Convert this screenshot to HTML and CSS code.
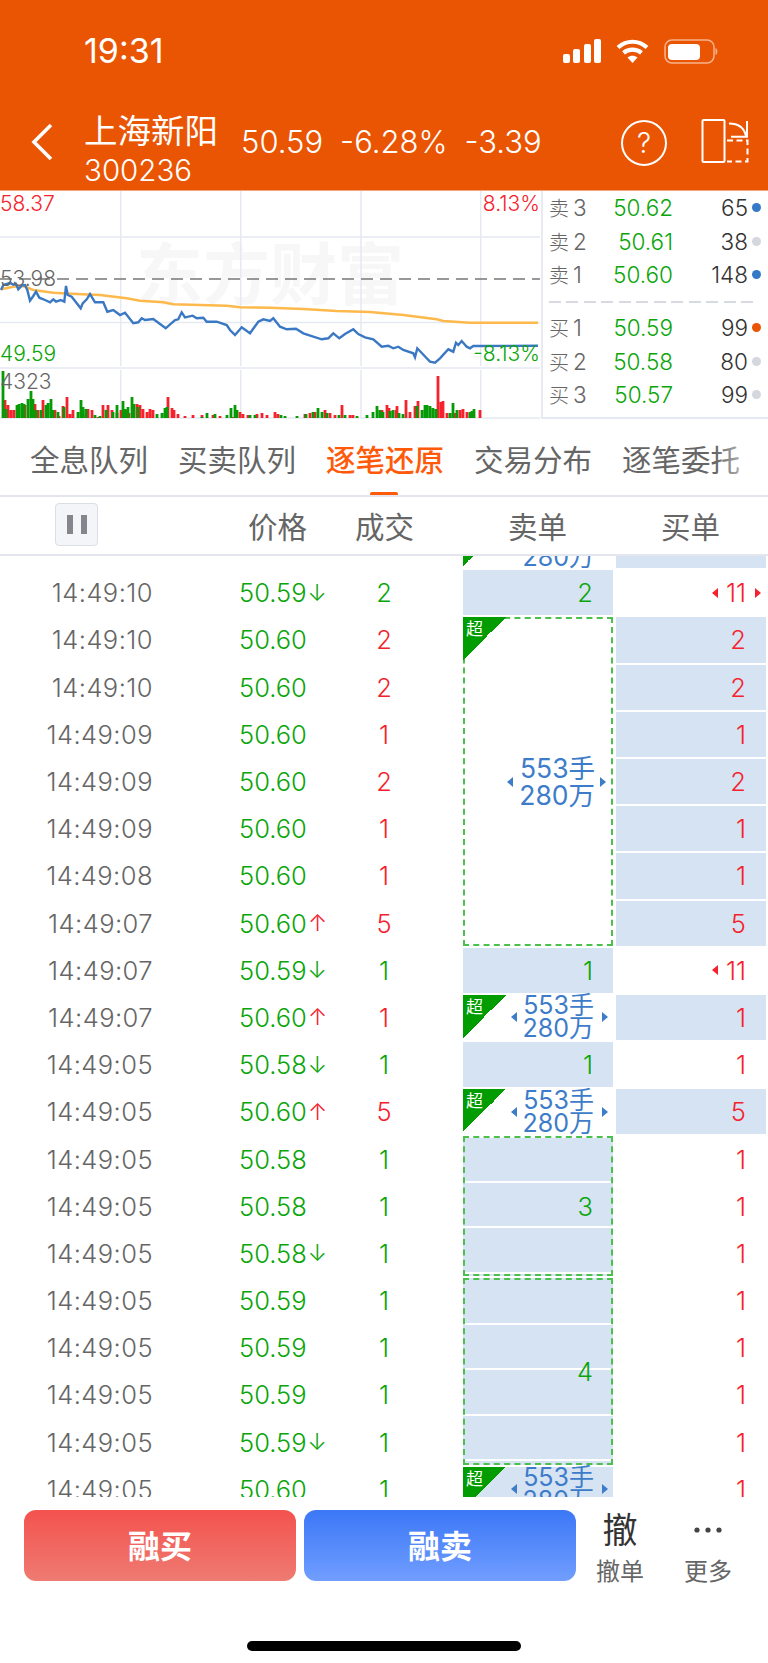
FILE: index.html
```html
<!DOCTYPE html>
<html lang="zh-CN">
<head>
    <meta charset="UTF-8">
    <meta name="viewport" content="width=device-width, initial-scale=1.0">
    <title>上海新阳 逐笔还原</title>
    <link rel="stylesheet" href="styles.css">
</head>
<body>
    <header class="top">
        <div class="status">
            <span class="clock">19:31</span>
            <div class="status-icons">
                <svg width="38" height="24" viewBox="0 0 38 24" fill="#fff">
                    <rect x="0" y="15" width="7" height="9" rx="2"/>
                    <rect x="10" y="10" width="7" height="14" rx="2"/>
                    <rect x="21" y="5" width="7" height="19" rx="2"/>
                    <rect x="31" y="0" width="7" height="24" rx="2"/>
                </svg>
                <svg width="33" height="24" viewBox="0 0 33 24" fill="none" stroke="#fff" stroke-width="4.2">
                    <path d="M2 8.5C10.500 .8 22.500 .8 31 8.500"/>
                    <path d="M7.500 13.800C12.500 9.500 20.500 9.500 25.500 13.800"/>
                    <path d="M16.500 24L11.500 18.500C14.500 16 18.500 16 21.500 18.500Z" fill="#fff" stroke="none"/>
                </svg>
                <svg width="54" height="25" viewBox="0 0 54 25">
                    <rect x="1" y="1" width="49" height="23" rx="7" fill="none" stroke="#f7b38c" stroke-width="1.500"/>
                    <rect x="4" y="5" width="32" height="16" rx="4" fill="#fff"/>
                    <path d="M51.500 9c2.500 .5 2.500 6.500 0 7z" fill="#f7b38c"/>
                </svg>
            </div>
        </div>
        <div class="nav">
            <svg class="back" width="22" height="38" viewBox="0 0 22 38" fill="none" stroke="#fff" stroke-width="3.600">
                <path d="M20 2L3 19L20 36"/>
            </svg>
            <div class="stock">
                <span class="stock-name">上海新阳</span>
                <span class="stock-code">300236</span>
            </div>
            <div class="quote">
                <span>50.59</span>
                <span>-6.28%</span>
                <span>-3.39</span>
            </div>
            <span class="help">?</span>
            <svg class="switch" width="48" height="44" viewBox="702 119 48 44" fill="none" stroke="#fff" stroke-width="2">
                <rect x="703.500" y="120" width="22" height="42" rx="1"/>
                <path d="M730 123.500C739 123.500 745 127 747 136"/>
                <path d="M732 136.700H748V121"/>
                <path d="M728 140.500H748.500V161.500H728" stroke-dasharray="6 3.500"/>
            </svg>
        </div>
    </header>

    <section class="market">
        <div class="chart">
            <span class="watermark">东方财富</span>
            <svg class="chart-lines" width="540" height="228" viewBox="0 191 540 228" fill="none">
                <path d="M120.700 191V366M240.700 191V366M361 191V366M480.700 191V366M120.700 370V418M240.700 370V418M361 370V418M480.700 370V418" stroke="#e6e9f2" stroke-width="1.500"/>
                <path d="M0 237H540M0 322.500H540M0 368H540M0 418H540" stroke="#e6e9f2" stroke-width="1.500"/>
                <path d="M0 279H540" stroke="#777" stroke-width="1.500" stroke-dasharray="12 7"/>
                <path class="avg-line" d="M1 289.300L13.300 286.700L23.300 286L33.300 290L53.300 292.700L76.700 294L100 295L126.700 298.300L140 300.700L163.300 302.300L173.300 304.300L200 305L226.700 305.700L240 307.300L270 307.700L303.300 309L336.700 311L370 312L403.300 315L436.700 319.300L443.300 321L470 322.700L538 322.700"/>
                <path class="price-line" d="M1 290L3.300 285L6.700 284L10 282.700L13.300 284.700L16 284L18.300 289.300L21.700 285.700L25 285L27.300 290L30 300.700L33.300 296L36 291.700L39.300 297.700L45 300L50 302.300L53.300 299.300L56 301.700L60.700 300L64.300 301.700L66 286L67.700 295L71.700 296.700L76 302.300L80.700 308.300L82.700 303.300L86.700 299.300L90 294L95 302.300L103.300 302.300L107.300 311.700L113.300 310L120 315L125 312.700L133.300 323.300L138.300 322.300L141.700 318.300L145 320L153.300 319L165.700 328.300L175 320L178.300 319.300L181.700 312.300L185 317.300L192.700 315.700L196.700 318.300L203.300 317.700L206.700 321.700L216.700 321.700L226.700 325L230 330L235 335L241.700 327.300L250 333.300L258.300 321.700L263.300 319.300L270 321L273.300 318.300L280 326.700L286.700 329.300L296 328.700L303.300 333.300L313.300 336.700L321.700 339.300L328.300 338.300L333.300 333.300L339.300 338.300L345 334L353.300 329.300L358.300 334L365 337.300L373.300 339.300L381.700 346.700L388.300 345.700L393.300 348.300L398.300 346.700L403.300 350L413.300 353.300L415 357.300L417.300 348.300L426.700 358.300L430 361.700L435 362.700L440 358.300L448.300 349.300L453.300 351.700L456 342.700L458.300 345L461.700 341L466.700 346.700L470 348.300L473.300 346L480 346L538 345.700"/>
                <path class="vol-up" d="M5 418v-18M8 418v-13M11 418v-8M14 418v-8M25 418v-13M35 418v-14M38 418v-8M43 418v-18M47 418v-6M55 418v-8M59 418v-2M63 418v-12M67 418v-21M70 418v-4M73 418v-8M83 418v-4M88 418v-9M92 418v-8M98 418v-1M103 418v-13M108 418v-13M112 418v-8M117 418v-5M121 418v-8M126 418v-8M129 418v-5M137 418v-14M140 418v-13M143 418v-9M147 418v-6M150 418v-9M153 418v-8M168 418v-21M172 418v-10M174 418v-8M178 418v-4M185 418v-2M193 418v-3M202 418v-3M213 418v-3M220 418v-2M233 418v-1M240 418v-6M243 418v-4M248 418v-3M257 418v-4M262 418v-5M267 418v-3M275 418v-6M278 418v-4M305 418v-4M310 418v-5M315 418v-6M325 418v-8M330 418v-5M335 418v-3M342 418v-13M350 418v-3M353 418v-3M382 418v-8M387 418v-13M389 418v-10M396 418v-8M397 418v-12M406 418v-18M410 418v-6M415 418v-12M418 418v-17M438 418v-42M441 418v-16M443 418v-17M447 418v-5M455 418v-5M460 418v-8M463 418v-9M467 418v-6M480 418v-8"/>
                <path class="vol-down" d="M3 418v-47M6 418v-9M17 418v-13M19 418v-14M22 418v-15M24 418v-14M28 418v-19M31 418v-27M33 418v-19M36 418v-8M41 418v-8M46 418v-13M48 418v-15M51 418v-19M53 418v-8M58 418v-6M64 418v-11M78 418v-6M81 418v-18M83 418v-11M86 418v-9M95 418v-3M100 418v-2M106 418v-8M113 418v-6M117 418v-13M123 418v-17M125 418v-9M128 418v-11M132 418v-21M134 418v-14M138 418v-11M157 418v-4M162 418v-5M165 418v-10M167 418v-11M202 418v-1M207 418v-5M215 418v-4M227 418v-3M231 418v-10M235 418v-13M237 418v-8M250 418v-3M255 418v-3M281 418v-3M285 418v-2M297 418v-2M306 418v-4M313 418v-6M318 418v-10M322 418v-6M327 418v-5M339 418v-3M345 418v-3M357 418v-2M367 418v-3M373 418v-6M377 418v-12M380 418v-8M383 418v-6M390 418v-7M393 418v-8M399 418v-5M403 418v-4M417 418v-12M422 418v-8M425 418v-13M427 418v-13M430 418v-12M433 418v-10M436 418v-9M450 418v-5M453 418v-15M457 418v-8M470 418v-6M472 418v-7M474 418v-9"/>
            </svg>
            <span class="axis axis-high">58.37</span>
            <span class="axis axis-high-pct">8.13%</span>
            <span class="axis axis-base">53.98</span>
            <span class="axis axis-low">49.59</span>
            <span class="axis axis-low-pct">-8.13%</span>
            <span class="axis axis-vol">4323</span>
        </div>
        <div class="book">
            <div class="book-group">
                <div class="level"><span class="level-name">卖<i>3</i></span><span class="level-price">50.62</span><span class="level-qty">65</span><span class="dot dot-blue"></span></div>
                <div class="level"><span class="level-name">卖<i>2</i></span><span class="level-price">50.61</span><span class="level-qty">38</span><span class="dot"></span></div>
                <div class="level"><span class="level-name">卖<i>1</i></span><span class="level-price">50.60</span><span class="level-qty">148</span><span class="dot dot-blue"></span></div>
            </div>
            <div class="book-rule"></div>
            <div class="book-group">
                <div class="level"><span class="level-name">买<i>1</i></span><span class="level-price">50.59</span><span class="level-qty">99</span><span class="dot dot-orange"></span></div>
                <div class="level"><span class="level-name">买<i>2</i></span><span class="level-price">50.58</span><span class="level-qty">80</span><span class="dot"></span></div>
                <div class="level"><span class="level-name">买<i>3</i></span><span class="level-price">50.57</span><span class="level-qty">99</span><span class="dot"></span></div>
            </div>
        </div>
    </section>

    <nav class="tabs">
        <span>全息队列</span>
        <span>买卖队列</span>
        <span class="active">逐笔还原</span>
        <span>交易分布</span>
        <span>逐笔委托</span>
    </nav>

    <div class="ticks-head">
        <div class="pause"><i></i><i></i></div>
        <span class="head-price">价格</span>
        <span class="head-count">成交</span>
        <span class="head-sell">卖单</span>
        <span class="head-buy">买单</span>
    </div>

    <main class="ticks">
        <div class="ticks-grid">
            <!-- this row has scrolled almost out, only the tail of the order shows -->
            <div class="sell big-order"><b class="flag"></b><span class="caret-l"></span><div class="lots"><span class="blank"></span><span>280万</span></div><span class="caret-r"></span></div>
            <div class="buy fill"></div>

            <div class="time">14:49:10</div><div class="price">50.59<em class="green">↓</em></div><div class="count green">2</div>
            <div class="sell fill green">2</div>
            <div class="buy red"><span class="caret-l"></span><span class="num">11</span><span class="caret-r"></span></div>

            <div class="time">14:49:10</div><div class="price">50.60</div><div class="count red">2</div>
            <div class="sell merged span-7"><b class="flag">超</b><span class="caret-l"></span><div class="lots lots-big"><span>553手</span><span>280万</span></div><span class="caret-r"></span></div>
            <div class="buy fill red">2</div>

            <div class="time">14:49:10</div><div class="price">50.60</div><div class="count red">2</div>
            <div class="buy fill red">2</div>

            <div class="time">14:49:09</div><div class="price">50.60</div><div class="count red">1</div>
            <div class="buy fill red">1</div>

            <div class="time">14:49:09</div><div class="price">50.60</div><div class="count red">2</div>
            <div class="buy fill red">2</div>

            <div class="time">14:49:09</div><div class="price">50.60</div><div class="count red">1</div>
            <div class="buy fill red">1</div>

            <div class="time">14:49:08</div><div class="price">50.60</div><div class="count red">1</div>
            <div class="buy fill red">1</div>

            <div class="time">14:49:07</div><div class="price">50.60<em class="red">↑</em></div><div class="count red">5</div>
            <div class="buy fill red">5</div>

            <div class="time">14:49:07</div><div class="price">50.59<em class="green">↓</em></div><div class="count green">1</div>
            <div class="sell fill green">1</div>
            <div class="buy red"><span class="caret-l"></span><span class="num">11</span></div>

            <div class="time">14:49:07</div><div class="price">50.60<em class="red">↑</em></div><div class="count red">1</div>
            <div class="sell big-order"><b class="flag">超</b><span class="caret-l"></span><div class="lots"><span>553手</span><span>280万</span></div><span class="caret-r"></span></div>
            <div class="buy fill red">1</div>

            <div class="time">14:49:05</div><div class="price">50.58<em class="green">↓</em></div><div class="count green">1</div>
            <div class="sell fill green">1</div>
            <div class="buy red">1</div>

            <div class="time">14:49:05</div><div class="price">50.60<em class="red">↑</em></div><div class="count red">5</div>
            <div class="sell big-order"><b class="flag">超</b><span class="caret-l"></span><div class="lots"><span>553手</span><span>280万</span></div><span class="caret-r"></span></div>
            <div class="buy fill red">5</div>

            <div class="time">14:49:05</div><div class="price">50.58</div><div class="count green">1</div>
            <div class="sell merged merged-fill span-3 green">3</div>
            <div class="buy red">1</div>

            <div class="time">14:49:05</div><div class="price">50.58</div><div class="count green">1</div>
            <div class="buy red">1</div>

            <div class="time">14:49:05</div><div class="price">50.58<em class="green">↓</em></div><div class="count green">1</div>
            <div class="buy red">1</div>

            <div class="time">14:49:05</div><div class="price">50.59</div><div class="count green">1</div>
            <div class="sell merged merged-fill span-4 green">4</div>
            <div class="buy red">1</div>

            <div class="time">14:49:05</div><div class="price">50.59</div><div class="count green">1</div>
            <div class="buy red">1</div>

            <div class="time">14:49:05</div><div class="price">50.59</div><div class="count green">1</div>
            <div class="buy red">1</div>

            <div class="time">14:49:05</div><div class="price">50.59<em class="green">↓</em></div><div class="count green">1</div>
            <div class="buy red">1</div>

            <div class="time">14:49:05</div><div class="price">50.60</div><div class="count green">1</div>
            <div class="sell big-order fill"><b class="flag">超</b><span class="caret-l"></span><div class="lots"><span>553手</span><span>280万</span></div><span class="caret-r"></span></div>
            <div class="buy red">1</div>
        </div>
    </main>

    <footer class="actions">
        <div class="action-row">
            <button class="trade trade-buy">融买</button>
            <button class="trade trade-sell">融卖</button>
            <div class="tool">
                <span class="tool-icon">撤</span>
                <span class="tool-label">撤单</span>
            </div>
            <div class="tool">
                <svg class="tool-dots" width="30" height="34" viewBox="0 0 30 34" fill="#444">
                    <circle cx="4" cy="17" r="2.600"/>
                    <circle cx="15" cy="17" r="2.600"/>
                    <circle cx="26" cy="17" r="2.600"/>
                </svg>
                <span class="tool-label">更多</span>
            </div>
        </div>
        <div class="home-bar"></div>
    </footer>
</body>
</html>
```

FILE: styles.css
```css
* {
    box-sizing: border-box;
}
html, body {
    height: 100%;
}
body {
    margin: 0;
    width: 768px;
    height: 1663px;
    display: flex;
    flex-direction: column;
    overflow: hidden;
    font-family: Inter, "Noto Sans CJK SC", sans-serif;
    background-color: #fff;
    color: #666;
}
.green {
    color: #0aa50a;
}
.red {
    color: #f5222d;
}

/* header */
.top {
    height: 191px;
    background-color: #ea5504;
    color: #fff;
    border-bottom: 1px solid #f0a57c;
}
.status {
    height: 112px;
    padding: 34px 50px 0 84px;
    display: flex;
    justify-content: space-between;
    align-items: flex-start;
}
.clock {
    font-size: 34px;
    line-height: 34px;
    font-weight: 400;
}
.status-icons {
    display: flex;
    gap: 15px;
    padding-top: 5px;
}
.nav {
    display: flex;
    align-items: flex-start;
    padding-left: 31px;
    position: relative;
}
.back {
    margin-top: 11px;
}
.stock {
    display: flex;
    flex-direction: column;
    margin-left: 31px;
    width: 157px;
}
.stock-name {
    font-size: 33.500px;
    line-height: 38px;
}
.stock-code {
    font-size: 29.500px;
    line-height: 34px;
    font-weight: 300;
    margin-top: 3px;
}
.quote {
    display: flex;
    gap: 17px;
    font-size: 31px;
    line-height: 36px;
    font-weight: 300;
    padding-top: 12px;
    width: 380px;
}
.help {
    width: 46px;
    height: 46px;
    margin-top: 8px;
    border: 2px solid #fff;
    border-radius: 50%;
    font-size: 28px;
    line-height: 42px;
    text-align: center;
    font-weight: 300;
}
.switch {
    margin: 7px 0 0 34px;
}

/* chart and order book */
.market {
    height: 228px;
    display: flex;
}
.chart {
    width: 541px;
    position: relative;
    overflow: hidden;
}
.chart-lines {
    display: block;
    position: relative;
}
.avg-line {
    stroke: #fdb94b;
    stroke-width: 2.600;
}
.price-line {
    stroke: #3b78c4;
    stroke-width: 2.400;
}
.vol-up {
    stroke: #f5222d;
    stroke-width: 2.800;
}
.vol-down {
    stroke: #079a07;
    stroke-width: 2.800;
}
.watermark {
    position: absolute;
    left: 136px;
    top: 44px;
    font-size: 67px;
    line-height: 80px;
    font-weight: 700;
    color: #f7f7f7;
    white-space: nowrap;
}
.axis {
    position: absolute;
    font-size: 21px;
    line-height: 24px;
    font-weight: 300;
}
.axis-high {
    left: 0;
    top: 1px;
    color: #f5222d;
}
.axis-high-pct {
    right: 1px;
    top: 1px;
    color: #f5222d;
}
.axis-base {
    left: 0;
    top: 76px;
}
.axis-low {
    left: 0;
    top: 151px;
    color: #0aa50a;
}
.axis-low-pct {
    right: 1px;
    top: 151px;
    color: #0aa50a;
}
.axis-vol {
    left: 0;
    top: 179px;
}
.book {
    flex: 1;
    border-left: 2px solid #e8eaf0;
    border-bottom: 2px solid #e6e9f2;
    padding: 0 6px;
}
.book-group {
    display: flex;
    flex-direction: column;
}
.level {
    height: 33.500px;
    display: grid;
    grid-template-columns: 40px 84px 75px 13px;
    align-items: center;
    font-size: 22.500px;
    font-weight: 300;
}
.level-name {
    font-size: 20px;
    color: #666;
    white-space: nowrap;
}
.level-name i {
    font-style: normal;
    font-size: 22.500px;
    margin-left: 4px;
}
.level-price {
    text-align: right;
    color: #0aa50a;
}
.level-qty {
    text-align: right;
    color: #333;
}
.dot {
    justify-self: end;
    width: 9px;
    height: 9px;
    border-radius: 50%;
    background-color: #d4d7dd;
}
.dot-blue {
    background-color: #3578c8;
}
.dot-orange {
    background-color: #ea5504;
}
.book-rule {
    height: 19.500px;
    margin: 0 4px 0 0;
    background: repeating-linear-gradient(90deg, #d8dae3 0 12px, transparent 12px 17.500px) 0 9px / 100% 2px no-repeat;
}

/* tabs */
.tabs {
    height: 78px;
    display: flex;
    gap: 30px;
    padding: 21px 0 0 30px;
    position: relative;
    border-bottom: 2px solid #e4e6ee;
    font-size: 29.500px;
    line-height: 40px;
    white-space: nowrap;
    overflow: hidden;
}
.tabs::after {
    content: "";
    position: absolute;
    right: 0;
    top: 0;
    width: 70px;
    height: 70px;
    background: linear-gradient(90deg, rgba(255, 255, 255, 0) 0%, rgba(255, 255, 255, 0) 25%, #fff 100%);
}
.tabs .active {
    color: #ff5a0a;
    font-weight: 500;
    position: relative;
}
.tabs .active::after {
    content: "";
    position: absolute;
    left: 44px;
    top: 52px;
    width: 28px;
    height: 4px;
    border-radius: 2px;
    background-color: #ff5a0a;
}

/* ticks table */
.ticks-head {
    height: 59px;
    flex-shrink: 0;
    display: grid;
    grid-template-columns: 248px 107px 153px 153px 1fr;
    align-items: center;
    padding-bottom: 2px;
    border-bottom: 2px solid #e4e6ee;
    font-size: 29.500px;
    position: relative;
}
.pause {
    width: 43px;
    height: 43px;
    margin-left: 55px;
    display: flex;
    justify-content: center;
    align-items: center;
    gap: 8px;
    background-color: #f4f5f9;
    border: 1px solid #dcdee6;
    border-radius: 4px;
}
.pause i {
    width: 6px;
    height: 19px;
    background-color: #85858d;
}
.ticks {
    flex: 1;
    overflow: hidden;
}
.ticks-grid {
    margin-top: -33px;
    display: grid;
    grid-template-columns: 153px 202px 58px 50px 150px 153px;
    grid-auto-rows: 47.200px;
    font-size: 25.500px;
    font-weight: 300;
}
.time, .price, .count, .sell, .buy {
    display: flex;
    align-items: center;
    margin-bottom: 2px;
}
.time {
    grid-column: 1;
    justify-content: flex-end;
    letter-spacing: .45px;
    color: #666;
}
.price {
    grid-column: 2;
    padding-left: 86px;
    color: #0aa50a;
}
.price em {
    font-style: normal;
    font-size: 23px;
    margin-left: 1px;
}
.count {
    grid-column: 3;
    justify-content: center;
}
.sell {
    grid-column: 5;
    justify-content: flex-end;
    padding-right: 20px;
    position: relative;
}
.buy {
    grid-column: 6;
    margin-left: 3px;
    justify-content: flex-end;
    padding-right: 20px;
    position: relative;
}
.fill {
    background-color: #d6e3f2;
}
.big-order, .merged {
    padding-right: 5px;
    color: #3d7cc9;
}
.merged {
    border: 2px dashed #4cc04c;
}
.merged-fill {
    padding-right: 18px;
    background: repeating-linear-gradient(180deg, #d6e3f2 0 43.200px, #fff 43.200px 45.200px);
}
.merged-fill.green {
    color: #0aa50a;
}
.span-3 {
    grid-row: span 3;
}
.span-4 {
    grid-row: span 4;
}
.span-7 {
    grid-row: span 7;
}
.flag {
    position: absolute;
    left: 0;
    top: 0;
    width: 43px;
    height: 43px;
    padding: 3px 0 0 3px;
    font-size: 17px;
    line-height: 18px;
    font-weight: 400;
    color: #fff;
    background: linear-gradient(135deg, #009c00 50%, transparent 50%);
}
.merged .flag {
    left: -2px;
    top: -2px;
}
.lots {
    display: flex;
    flex-direction: column;
    align-items: flex-end;
    margin: 0 8px 0 6px;
    font-size: 25px;
    line-height: 23px;
    font-weight: 400;
}
.lots-big {
    margin-right: 5px;
    font-size: 26.500px;
    line-height: 27px;
}
.blank {
    height: 23px;
}
.caret-l, .caret-r {
    width: 0;
    height: 0;
    border-style: solid;
    border-width: 5px 0;
    border-color: transparent;
}
.caret-l {
    border-right: 6px solid currentColor;
}
.caret-r {
    border-left: 6px solid currentColor;
}
.buy .caret-l {
    margin-right: 8px;
}
.buy .caret-r {
    position: absolute;
    right: 5px;
    top: 18px;
}

/* bottom bar */
.actions {
    height: 166px;
    flex-shrink: 0;
    background-color: #fff;
    padding-top: 13px;
}
.action-row {
    display: flex;
    padding-left: 24px;
}
.trade {
    width: 272px;
    height: 71px;
    margin-right: 8px;
    padding-bottom: 4px;
    border: none;
    border-radius: 12px;
    color: #fff;
    font-family: inherit;
    font-size: 32px;
    font-weight: 700;
}
.trade-buy {
    background: linear-gradient(180deg, #f4524e, #ee7b72);
}
.trade-sell {
    background: linear-gradient(180deg, #3b77f6, #719eff);
}
.tool {
    width: 88px;
    margin-left: -8px;
    margin-right: 8px;
    display: flex;
    flex-direction: column;
    align-items: center;
}
.tool-icon {
    font-size: 35px;
    line-height: 40px;
    color: #333;
}
.tool-dots {
    margin: 3px 0;
}
.tool-label {
    font-size: 24px;
    line-height: 30px;
    margin-top: 7px;
}
.home-bar {
    width: 274px;
    height: 10px;
    margin: 54px auto 0;
    border-radius: 5px;
    background-color: #000;
}
```
